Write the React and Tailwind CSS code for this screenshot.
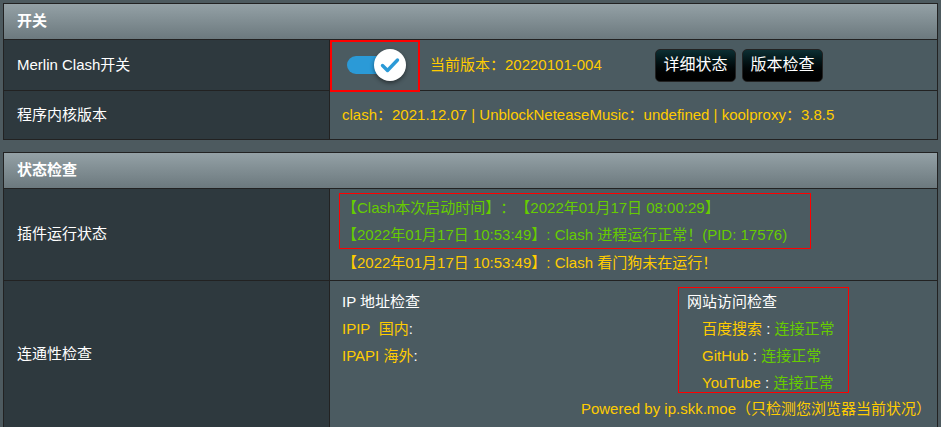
import React from "react";

const FONT = { fontFamily: '"Liberation Sans", Arial, "Noto Sans CJK SC", sans-serif' };

function Header({ children }) {
  return (
    <div className="h-[36px] flex items-center pl-[13px] border-b border-[#222] bg-gradient-to-b from-[#94a1a6] to-[#6c797e] text-white font-bold text-[15px]">
      {children}
    </div>
  );
}

function Row({ label, height, children, last }) {
  return (
    <div className={`flex ${last ? "" : "border-b border-[#222]"}`} style={{ height }}>
      <div className="w-[326px] shrink-0 bg-[#2e393e] border-r border-[#222] flex items-center pl-[13px] text-white text-[15px]">
        {label}
      </div>
      <div className="flex-1 bg-[#4b5b61] relative">{children}</div>
    </div>
  );
}

function Btn({ children }) {
  return (
    <div className="w-[81px] h-[33px] rounded-[5px] border border-[#222] bg-gradient-to-b from-[#0d2f33] to-[#000] flex items-center justify-center text-white text-[16px]">
      {children}
    </div>
  );
}

export default function App() {
  return (
    <div
      className="w-[941px] h-[427px] overflow-hidden bg-[#4d5a5f] pt-[3px] pl-[3px] [text-spacing-trim:space-all]"
      style={FONT}
    >
      {/* Table 1 */}
      <div className="w-[935px] border border-[#222]">
        <Header>开关</Header>
        <Row label="Merlin Clash开关" height={51}>
          <div className="h-full flex items-center">
            <div className="relative ml-[17px] w-[59px] h-[32px] flex items-center">
              <div className="w-[38px] h-[18px] rounded-full bg-[#2b9ad7]" />
              <div className="absolute left-[27px] top-[0px] w-[32px] h-[32px] rounded-full bg-white shadow-[0_2px_4px_rgba(0,0,0,0.45)] flex items-center justify-center">
                <svg width="32" height="32" viewBox="0 0 32 32">
                  <path d="M8.5 16.5 L13.5 21.5 L23.5 11" fill="none" stroke="#2b9ad7" strokeWidth="3.4" strokeLinecap="round" strokeLinejoin="round" />
                </svg>
              </div>
            </div>
            <span className="ml-[24px] w-[225px] text-[#ffcc00] text-[15px]">当前版本：20220101-004</span>
            <Btn>详细状态</Btn>
            <div className="w-[6px]" />
            <Btn>版本检查</Btn>
          </div>
          <div className="absolute left-0 top-0 w-[90px] h-[52px] border-2 border-[#ff0000] z-10" />
        </Row>
        <Row label="程序内核版本" height={48} last>
          <div className="h-full flex items-center pl-[12px] text-[#ffcc00] text-[15px]">
            clash：2021.12.07 | UnblockNeteaseMusic：undefined | koolproxy：3.8.5
          </div>
        </Row>
      </div>

      {/* Table 2 */}
      <div className="w-[935px] border border-[#222] mt-[12px]">
        <Header>状态检查</Header>
        <Row label="插件运行状态" height={92}>
          <div className="pt-[4px] pl-[9px] text-[15px] leading-[27px]">
            <div className="w-[472px] border border-[#ff0000] px-[2px] text-[#66cc00]">
              <div>【Clash本次启动时间】：【2022年01月17日 08:00:29】</div>
              <div>【2022年01月17日 10:53:49】: Clash 进程运行正常！(PID: 17576)</div>
            </div>
            <div className="pl-[3px] text-[#ffcc00]">【2022年01月17日 10:53:49】: Clash 看门狗未在运行！</div>
          </div>
        </Row>
        <Row label="连通性检查" height={146} last>
          <div className="text-[15px] leading-[27px]">
            <div className="flex">
              <div className="flex-1 pl-[12px] pt-[7px]">
                <div className="text-white">IP 地址检查</div>
                <div>
                  <span className="text-[#ffcc00]">IPIP&nbsp;&nbsp;国内</span>
                  <span className="text-white">:</span>
                </div>
                <div>
                  <span className="text-[#ffcc00]">IPAPI 海外</span>
                  <span className="text-white">:</span>
                </div>
              </div>
              <div className="w-[171px] h-[106px] mt-[6px] mr-[88px] border border-[#ff0000] pl-[8px]">
                <div className="text-white">网站访问检查</div>
                <div className="pl-[15px] whitespace-nowrap">
                  <span className="text-[#ffcc00]">百度搜索</span>
                  <span className="text-white"> : </span>
                  <span className="text-[#66cc00]">连接正常</span>
                </div>
                <div className="pl-[15px] whitespace-nowrap">
                  <span className="text-[#ffcc00]">GitHub</span>
                  <span className="text-white"> : </span>
                  <span className="text-[#66cc00]">连接正常</span>
                </div>
                <div className="pl-[15px] whitespace-nowrap">
                  <span className="text-[#ffcc00]">YouTube</span>
                  <span className="text-white"> : </span>
                  <span className="text-[#66cc00]">连接正常</span>
                </div>
              </div>
            </div>
            <div className="mt-[2px] text-right pr-[6px] text-[#ffcc00] whitespace-nowrap">
              Powered by ip.skk.moe（只检测您浏览器当前状况）
            </div>
          </div>
        </Row>
      </div>
    </div>
  );
}
